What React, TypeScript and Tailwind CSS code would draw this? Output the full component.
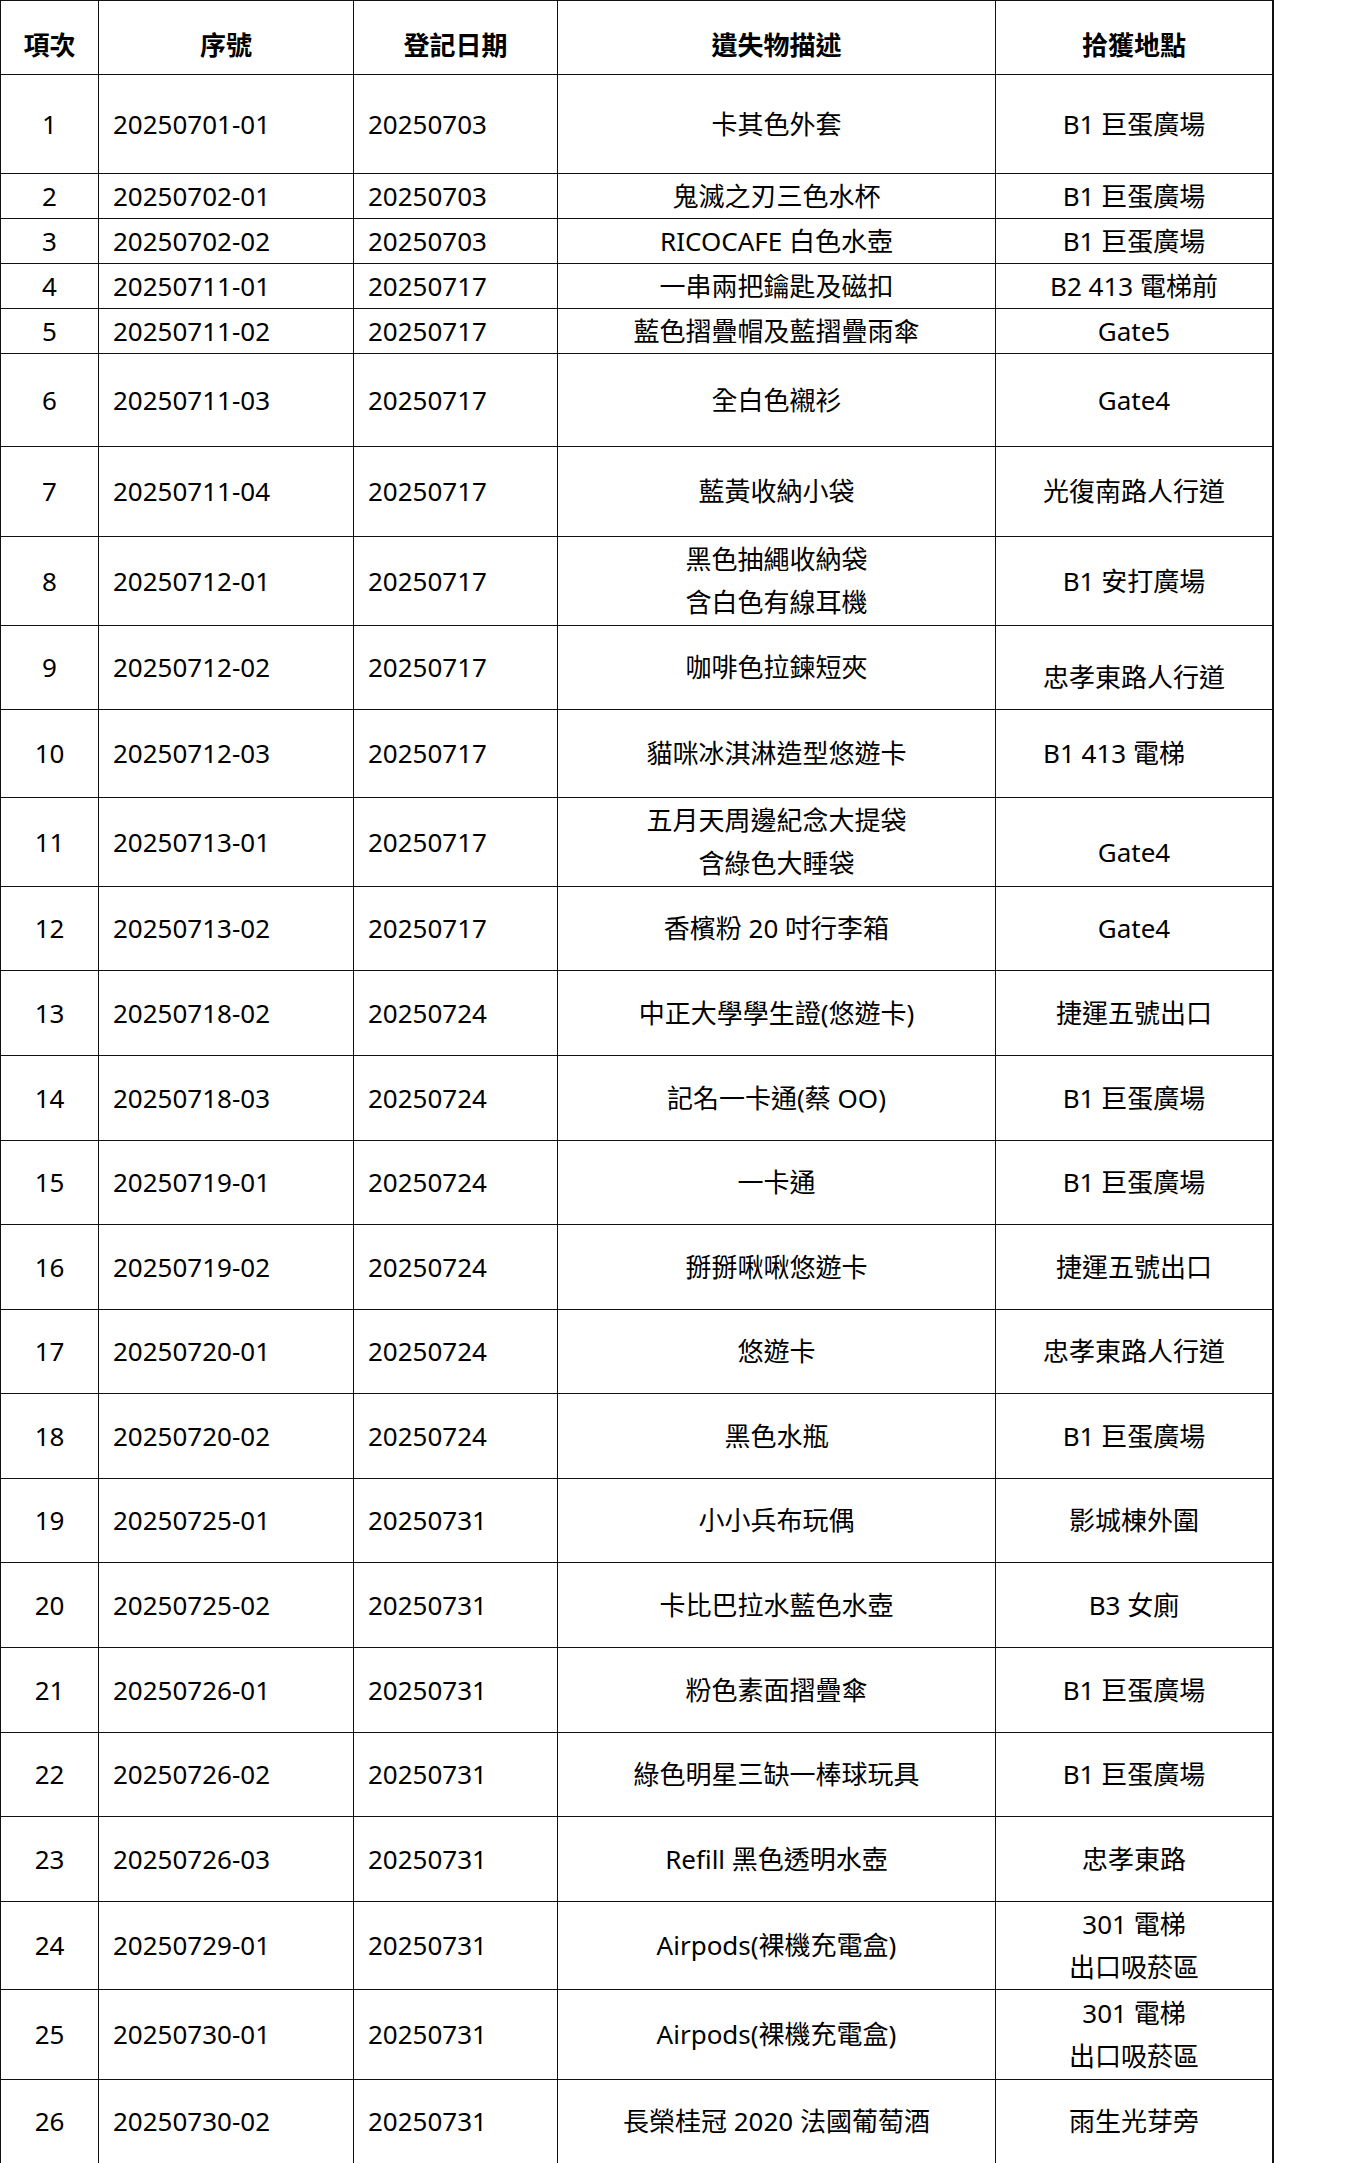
type Row = {
  no: string;
  serial: string;
  date: string;
  item: string[];
  place: string[];
  h: string;
  placeCls?: string;
};

const rows: Row[] = [
  { no: "1", serial: "20250701-01", date: "20250703", item: ["卡其色外套"], place: ["B1 巨蛋廣場"], h: "h-[99px]" },
  { no: "2", serial: "20250702-01", date: "20250703", item: ["鬼滅之刃三色水杯"], place: ["B1 巨蛋廣場"], h: "h-[45px]" },
  { no: "3", serial: "20250702-02", date: "20250703", item: ["RICOCAFE 白色水壺"], place: ["B1 巨蛋廣場"], h: "h-[45px]" },
  { no: "4", serial: "20250711-01", date: "20250717", item: ["一串兩把鑰匙及磁扣"], place: ["B2 413 電梯前"], h: "h-[45px]" },
  { no: "5", serial: "20250711-02", date: "20250717", item: ["藍色摺疊帽及藍摺疊雨傘"], place: ["Gate5"], h: "h-[45px]" },
  { no: "6", serial: "20250711-03", date: "20250717", item: ["全白色襯衫"], place: ["Gate4"], h: "h-[93px]" },
  { no: "7", serial: "20250711-04", date: "20250717", item: ["藍黃收納小袋"], place: ["光復南路人行道"], h: "h-[90px]" },
  { no: "8", serial: "20250712-01", date: "20250717", item: ["黑色抽繩收納袋", "含白色有線耳機"], place: ["B1 安打廣場"], h: "h-[89px]" },
  { no: "9", serial: "20250712-02", date: "20250717", item: ["咖啡色拉鍊短夾"], place: ["忠孝東路人行道"], h: "h-[84px]", placeCls: "pt-[20px]" },
  { no: "10", serial: "20250712-03", date: "20250717", item: ["貓咪冰淇淋造型悠遊卡"], place: ["B1 413 電梯"], h: "h-[88px]", placeCls: "pr-[40px]" },
  { no: "11", serial: "20250713-01", date: "20250717", item: ["五月天周邊紀念大提袋", "含綠色大睡袋"], place: ["Gate4"], h: "h-[89px]", placeCls: "pt-[20px]" },
  { no: "12", serial: "20250713-02", date: "20250717", item: ["香檳粉 20 吋行李箱"], place: ["Gate4"], h: "h-[84px]" },
  { no: "13", serial: "20250718-02", date: "20250724", item: ["中正大學學生證(悠遊卡)"], place: ["捷運五號出口"], h: "h-[85px]" },
  { no: "14", serial: "20250718-03", date: "20250724", item: ["記名一卡通(蔡 OO)"], place: ["B1 巨蛋廣場"], h: "h-[85px]" },
  { no: "15", serial: "20250719-01", date: "20250724", item: ["一卡通"], place: ["B1 巨蛋廣場"], h: "h-[84px]" },
  { no: "16", serial: "20250719-02", date: "20250724", item: ["掰掰啾啾悠遊卡"], place: ["捷運五號出口"], h: "h-[85px]" },
  { no: "17", serial: "20250720-01", date: "20250724", item: ["悠遊卡"], place: ["忠孝東路人行道"], h: "h-[84px]" },
  { no: "18", serial: "20250720-02", date: "20250724", item: ["黑色水瓶"], place: ["B1 巨蛋廣場"], h: "h-[85px]" },
  { no: "19", serial: "20250725-01", date: "20250731", item: ["小小兵布玩偶"], place: ["影城棟外圍"], h: "h-[84px]" },
  { no: "20", serial: "20250725-02", date: "20250731", item: ["卡比巴拉水藍色水壺"], place: ["B3 女廁"], h: "h-[85px]" },
  { no: "21", serial: "20250726-01", date: "20250731", item: ["粉色素面摺疊傘"], place: ["B1 巨蛋廣場"], h: "h-[85px]" },
  { no: "22", serial: "20250726-02", date: "20250731", item: ["綠色明星三缺一棒球玩具"], place: ["B1 巨蛋廣場"], h: "h-[84px]" },
  { no: "23", serial: "20250726-03", date: "20250731", item: ["Refill 黑色透明水壺"], place: ["忠孝東路"], h: "h-[85px]" },
  { no: "24", serial: "20250729-01", date: "20250731", item: ["Airpods(裸機充電盒)"], place: ["301 電梯", "出口吸菸區"], h: "h-[88px]" },
  { no: "25", serial: "20250730-01", date: "20250731", item: ["Airpods(裸機充電盒)"], place: ["301 電梯", "出口吸菸區"], h: "h-[90px]" },
  { no: "26", serial: "20250730-02", date: "20250731", item: ["長榮桂冠 2020 法國葡萄酒"], place: ["雨生光芽旁"], h: "h-[84px]" },
];

const Lines = ({ lines }: { lines: string[] }) => (
  <div className="flex flex-col items-center">
    {lines.map((l, i) => (
      <span key={i} className="leading-[43px]">
        {l}
      </span>
    ))}
  </div>
);

export default function App() {
  return (
    <div
      className="w-[1350px] h-[2163px] overflow-hidden bg-white text-black text-[26px]"
      style={{ fontFamily: '"Noto Sans", "Noto Sans CJK TC", sans-serif' }}
    >
      <div className="w-[1274px] border-l border-t border-r-2 border-[#111]">
        <div className="flex h-[74px] border-b border-[#111] font-bold">
          <div className="w-[98px] flex items-center justify-center pt-4 border-r border-[#111]">項次</div>
          <div className="w-[255px] flex items-center justify-center pt-4 border-r border-[#111]">序號</div>
          <div className="w-[204px] flex items-center justify-center pt-4 border-r border-[#111]">登記日期</div>
          <div className="w-[438px] flex items-center justify-center pt-4 border-r border-[#111]">遺失物描述</div>
          <div className="flex-1 flex items-center justify-center pt-4">拾獲地點</div>
        </div>
        {rows.map((r) => (
          <div key={r.no} className={`flex border-b border-[#111] ${r.h}`}>
            <div className="w-[98px] flex items-center justify-center border-r border-[#111]">{r.no}</div>
            <div className="w-[255px] flex items-center pl-[14px] border-r border-[#111]">{r.serial}</div>
            <div className="w-[204px] flex items-center pl-[14px] border-r border-[#111]">{r.date}</div>
            <div className="w-[438px] flex items-center justify-center border-r border-[#111]">
              <Lines lines={r.item} />
            </div>
            <div className={`flex-1 flex items-center justify-center ${r.placeCls ?? ""}`}>
              <Lines lines={r.place} />
            </div>
          </div>
        ))}
      </div>
    </div>
  );
}
